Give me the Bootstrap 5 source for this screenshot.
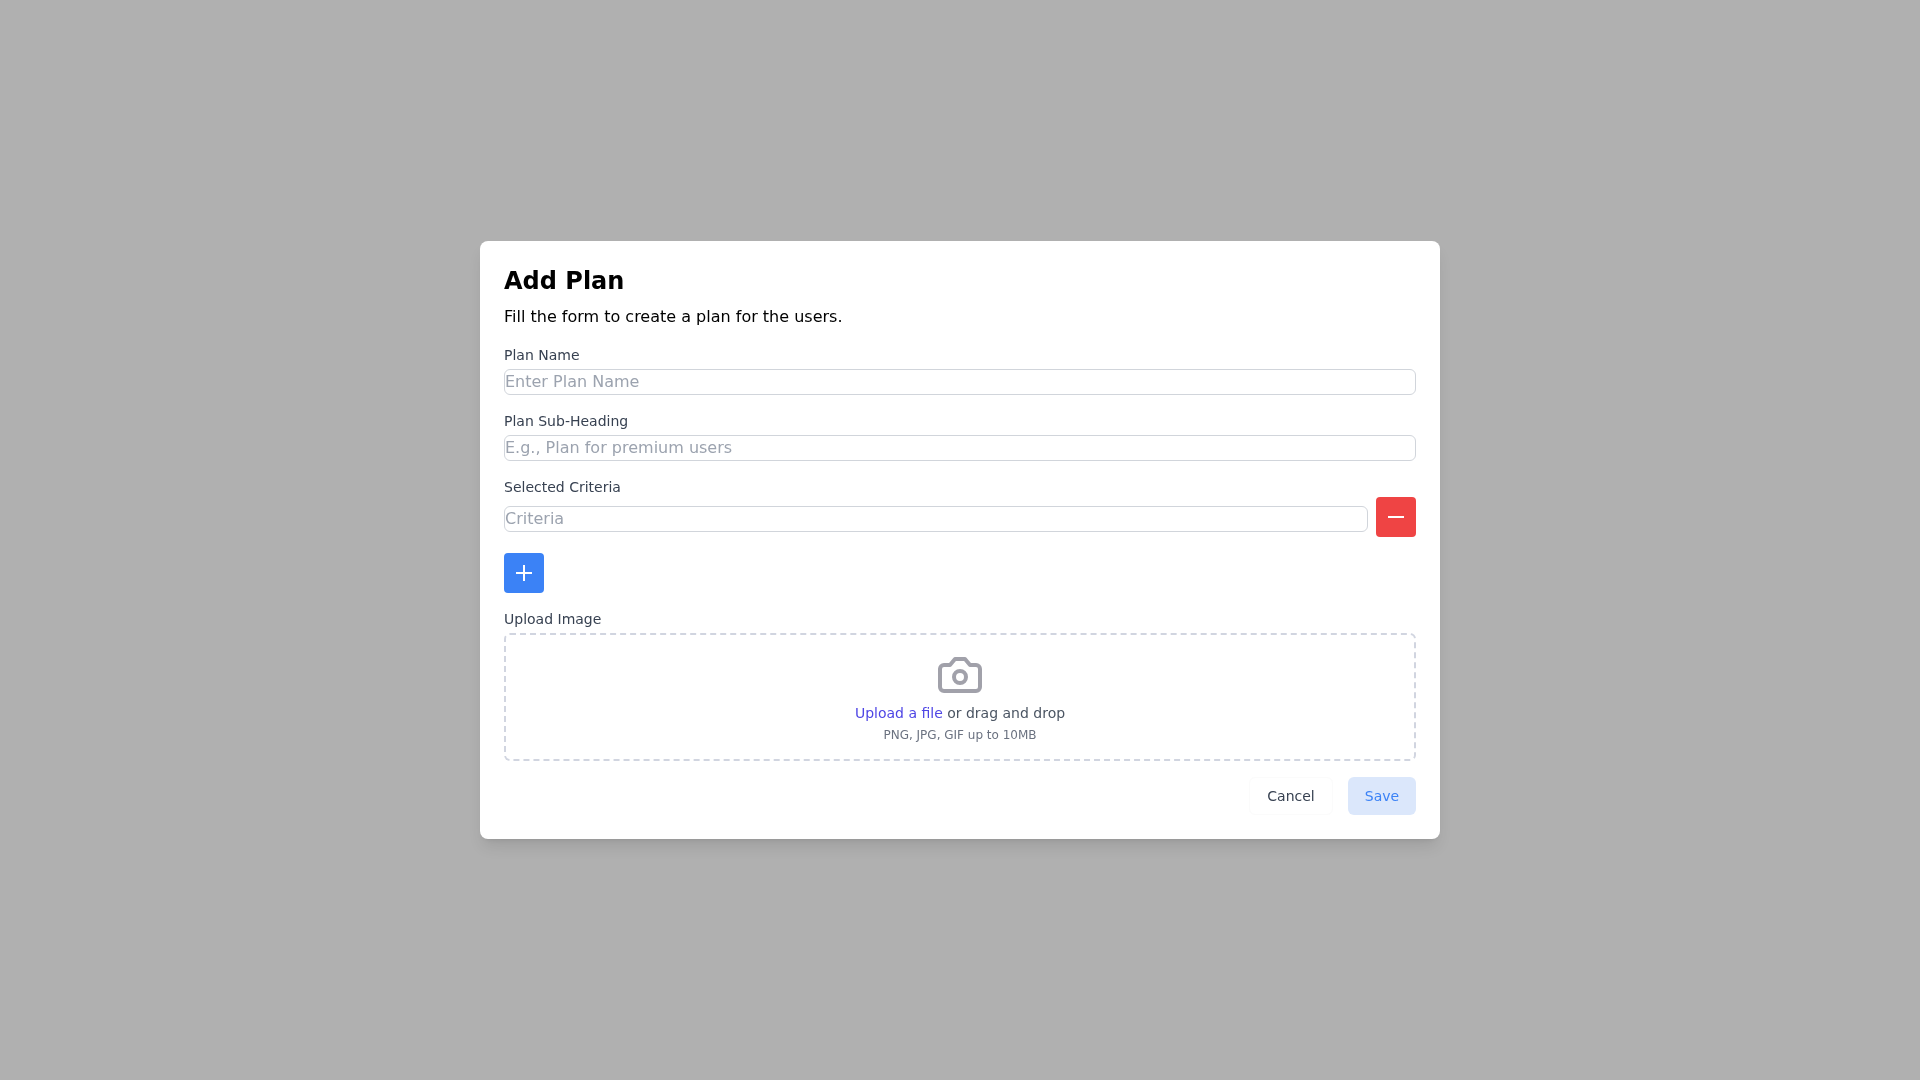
<!DOCTYPE html>
<html lang="en">
<head>
  <meta charset="UTF-8" />
  <meta name="viewport" content="width=device-width, initial-scale=1.0"/>
  <title>Add Plan</title>
  <link href="https://cdn.jsdelivr.net/npm/bootstrap@5.3.2/dist/css/bootstrap.min.css" rel="stylesheet"/>
  <style>
    body {
      background-color: #b0b0b0;
      font-family: "DejaVu Sans", sans-serif;
      color: #000;
    }
    .plan-dialog {
      width: 960px;
      padding: 24px;
      background: #fff;
      border-radius: 8px;
      box-shadow: 0 10px 15px -3px rgba(0,0,0,.1), 0 4px 6px -4px rgba(0,0,0,.1);
      transform: translateZ(0);
    }
    .plan-title {
      font-size: 24px;
      line-height: 32px;
      font-weight: 700;
      margin: 0 0 8px;
    }
    .plan-intro {
      font-size: 16px;
      line-height: 24px;
      margin: 0 0 16px;
    }
    .plan-label {
      display: block;
      font-size: 14px;
      line-height: 20px;
      color: #374151;
      margin: 0 0 4px;
    }
    .plan-input.form-control {
      padding: 0;
      font-size: 16px;
      line-height: 24px;
      min-height: 0;
      border: 1px solid #d1d5db;
      border-radius: 6px;
    }
    .plan-input.form-control::placeholder {
      color: #9ca3af;
      opacity: 1;
    }
    .plan-square {
      width: 40px;
      height: 40px;
      padding: 0;
      border: 0;
      border-radius: 4px;
      color: #fff;
      flex: none;
    }
    .plan-square.is-red { background: #ef4444; }
    .plan-square.is-blue { background: #3b82f6; }
    .plan-drop {
      border: 2px dashed #d1d5e0;
      border-radius: 6px;
      padding: 16px;
    }
    .plan-drop-icon {
      display: block;
      width: 48px;
      height: 48px;
      color: #a1a1aa;
    }
    .plan-drop-text {
      font-size: 14px;
      line-height: 20px;
      color: #4b5563;
      margin-top: 4px;
    }
    .plan-drop-text a {
      color: #4f46e5;
      text-decoration: none;
    }
    .plan-drop-hint {
      font-size: 12px;
      line-height: 16px;
      color: #6b7280;
      margin-top: 4px;
    }
    .plan-actions {
      gap: 15px;
    }
    .plan-btn {
      height: 38px;
      padding: 0 16px;
      font-size: 14px;
      line-height: 20px;
      border-radius: 6px;
    }
    .plan-btn.is-cancel {
      width: 84px;
      background: #fff;
      color: #374151;
      border: 1px solid #fbfbfb;
    }
    .plan-btn.is-save {
      width: 68px;
      background: #dbe7fb;
      color: #3b82f6;
      border: 0;
    }
  </style>
</head>
<body>
  <div class="d-flex justify-content-center align-items-center vh-100">
    <div class="plan-dialog">
      <h2 class="plan-title">Add Plan</h2>
      <p class="plan-intro">Fill the form to create a plan for the users.</p>

      <div class="mb-3">
        <label class="plan-label" for="planName">Plan Name</label>
        <input type="text" id="planName" class="form-control plan-input" placeholder="Enter Plan Name" />
      </div>

      <div class="mb-3">
        <label class="plan-label" for="planSub">Plan Sub-Heading</label>
        <input type="text" id="planSub" class="form-control plan-input" placeholder="E.g., Plan for premium users" />
      </div>

      <div class="plan-label mb-0">Selected Criteria</div>
      <div class="d-flex align-items-center gap-2 mb-3">
        <input type="text" class="form-control plan-input mt-1" placeholder="Criteria" />
        <button type="button" class="plan-square is-red d-flex align-items-center justify-content-center" aria-label="Remove">
          <svg width="16" height="16" viewBox="0 0 16 16" fill="none" stroke="currentColor" stroke-width="2"><path d="M0 8h16"/></svg>
        </button>
      </div>

      <button type="button" class="plan-square is-blue d-flex align-items-center justify-content-center mb-3" aria-label="Add">
        <svg width="16" height="16" viewBox="0 0 16 16" fill="none" stroke="currentColor" stroke-width="2"><path d="M0 8h16M8 0v16"/></svg>
      </button>

      <div class="plan-label">Upload Image</div>
      <div class="plan-drop d-flex flex-column align-items-center">
        <svg class="plan-drop-icon" viewBox="0 0 24 24" fill="none" stroke="currentColor" stroke-width="2" stroke-linecap="round" stroke-linejoin="round">
          <path d="M14.5 4h-5L7 7H4a2 2 0 0 0-2 2v9a2 2 0 0 0 2 2h16a2 2 0 0 0 2-2V9a2 2 0 0 0-2-2h-3l-2.5-3z"/>
          <circle cx="12" cy="13" r="3"/>
        </svg>
        <div class="plan-drop-text"><a href="#">Upload a file</a> or drag and drop</div>
        <div class="plan-drop-hint">PNG, JPG, GIF up to 10MB</div>
      </div>

      <div class="d-flex justify-content-end mt-3 plan-actions">
        <button type="button" class="plan-btn is-cancel">Cancel</button>
        <button type="button" class="plan-btn is-save">Save</button>
      </div>
    </div>
  </div>

  <script src="https://cdn.jsdelivr.net/npm/bootstrap@5.3.2/dist/js/bootstrap.bundle.min.js"></script>
</body>
</html>
